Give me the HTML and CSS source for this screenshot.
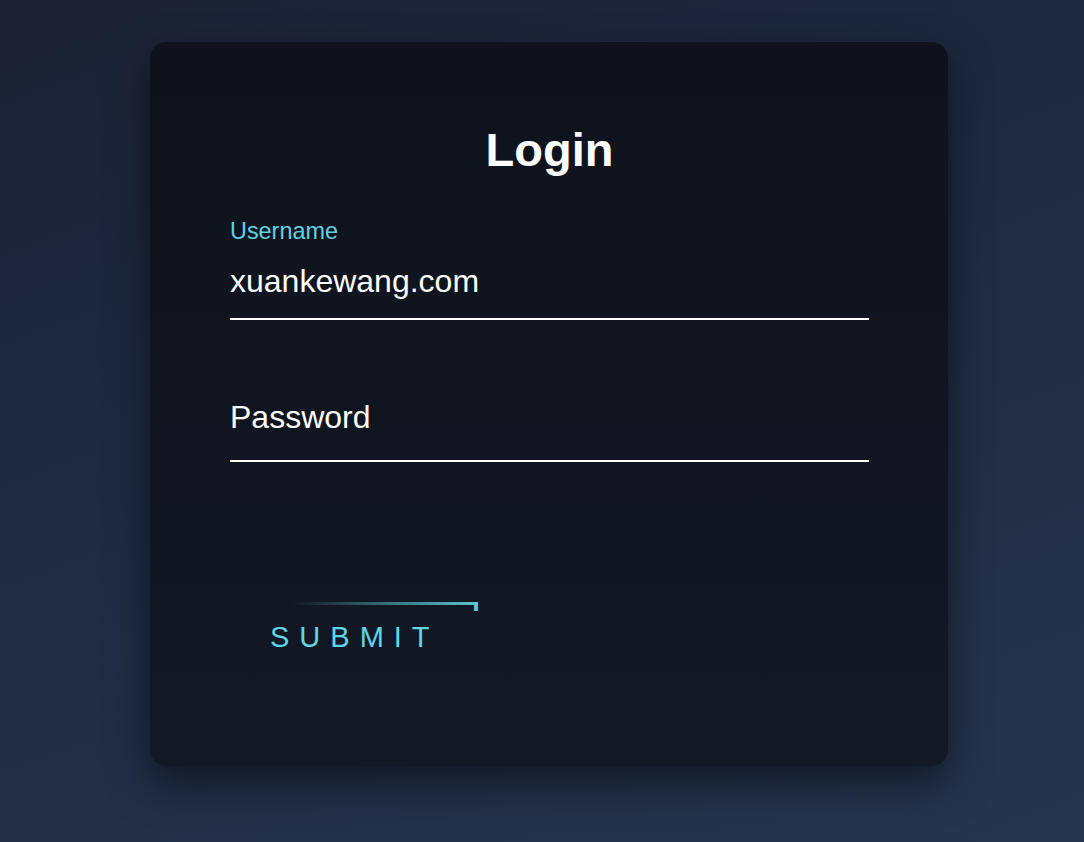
FILE: index.html
```html
<!DOCTYPE html>
<html lang="en">
<head>
<meta charset="utf-8">
<title>Login</title>
<link rel="stylesheet" href="styles.css">
</head>
<body>
  <div class="card">
    <h2 class="title">Login</h2>
    <form class="form">
      <div class="field filled">
        <input type="text" value="xuankewang.com">
        <label>Username</label>
      </div>
      <div class="field">
        <input type="password">
        <label>Password</label>
      </div>
      <a class="submit" href="#">
        <span class="line-top"></span>
        <span class="line-right"></span>
        SUBMIT
      </a>
    </form>
  </div>
</body>
</html>
```
FILE: styles.css
```css
html, body {
  margin: 0;
  padding: 0;
}
body {
  min-height: 842px;
  background: linear-gradient(160deg, #1b2234 0%, #1f2a40 45%, #26354f 100%);
  font-family: "Liberation Sans", Arial, sans-serif;
  overflow: hidden;
}
.card {
  box-sizing: border-box;
  width: 798px;
  height: 724px;
  margin: 42px 0 0 150px;
  padding: 81px 79px 0 80px;
  border-radius: 16px;
  background: linear-gradient(180deg, #0e121b 0%, #121925 100%);
  box-shadow: 0 18px 40px rgba(0, 0, 0, 0.5);
}
.title {
  margin: 0 0 64px;
  text-align: center;
  color: #ffffff;
  font-size: 47px;
  font-weight: bold;
  line-height: 54px;
}
.form {
  display: flex;
  flex-direction: column;
  align-items: flex-start;
}
.field {
  position: relative;
  width: 100%;
  margin-bottom: 140px;
}
.field:first-child {
  margin-bottom: 63px;
}
.field input {
  display: block;
  box-sizing: border-box;
  width: 100%;
  margin: 0;
  padding: 22px 0 18px;
  border: none;
  border-bottom: 2px solid #ffffff;
  background: transparent;
  color: #ffffff;
  font-family: "Liberation Sans", Arial, sans-serif;
  font-size: 32px;
  line-height: 37px;
  outline: none;
}
.field label {
  position: absolute;
  left: 0;
  top: 16px;
  color: #ffffff;
  font-size: 32px;
  line-height: 37px;
  pointer-events: none;
}
.field.filled label {
  top: -23px;
  color: #5fd3e2;
  font-size: 23.4px;
  line-height: 27px;
}
.submit {
  position: relative;
  display: inline-block;
  padding: 19px 38px 19px 40px;
  color: #5fd6e6;
  font-size: 29px;
  line-height: 33px;
  letter-spacing: 10px;
  text-decoration: none;
}
.line-top {
  position: absolute;
  left: 0;
  right: 0;
  top: 0;
  height: 3px;
  background: linear-gradient(90deg, transparent 25%, #59c4cc 100%);
}
.line-right {
  position: absolute;
  right: 0;
  top: 0;
  width: 4px;
  height: 9px;
  background: #59c4cc;
}
```
